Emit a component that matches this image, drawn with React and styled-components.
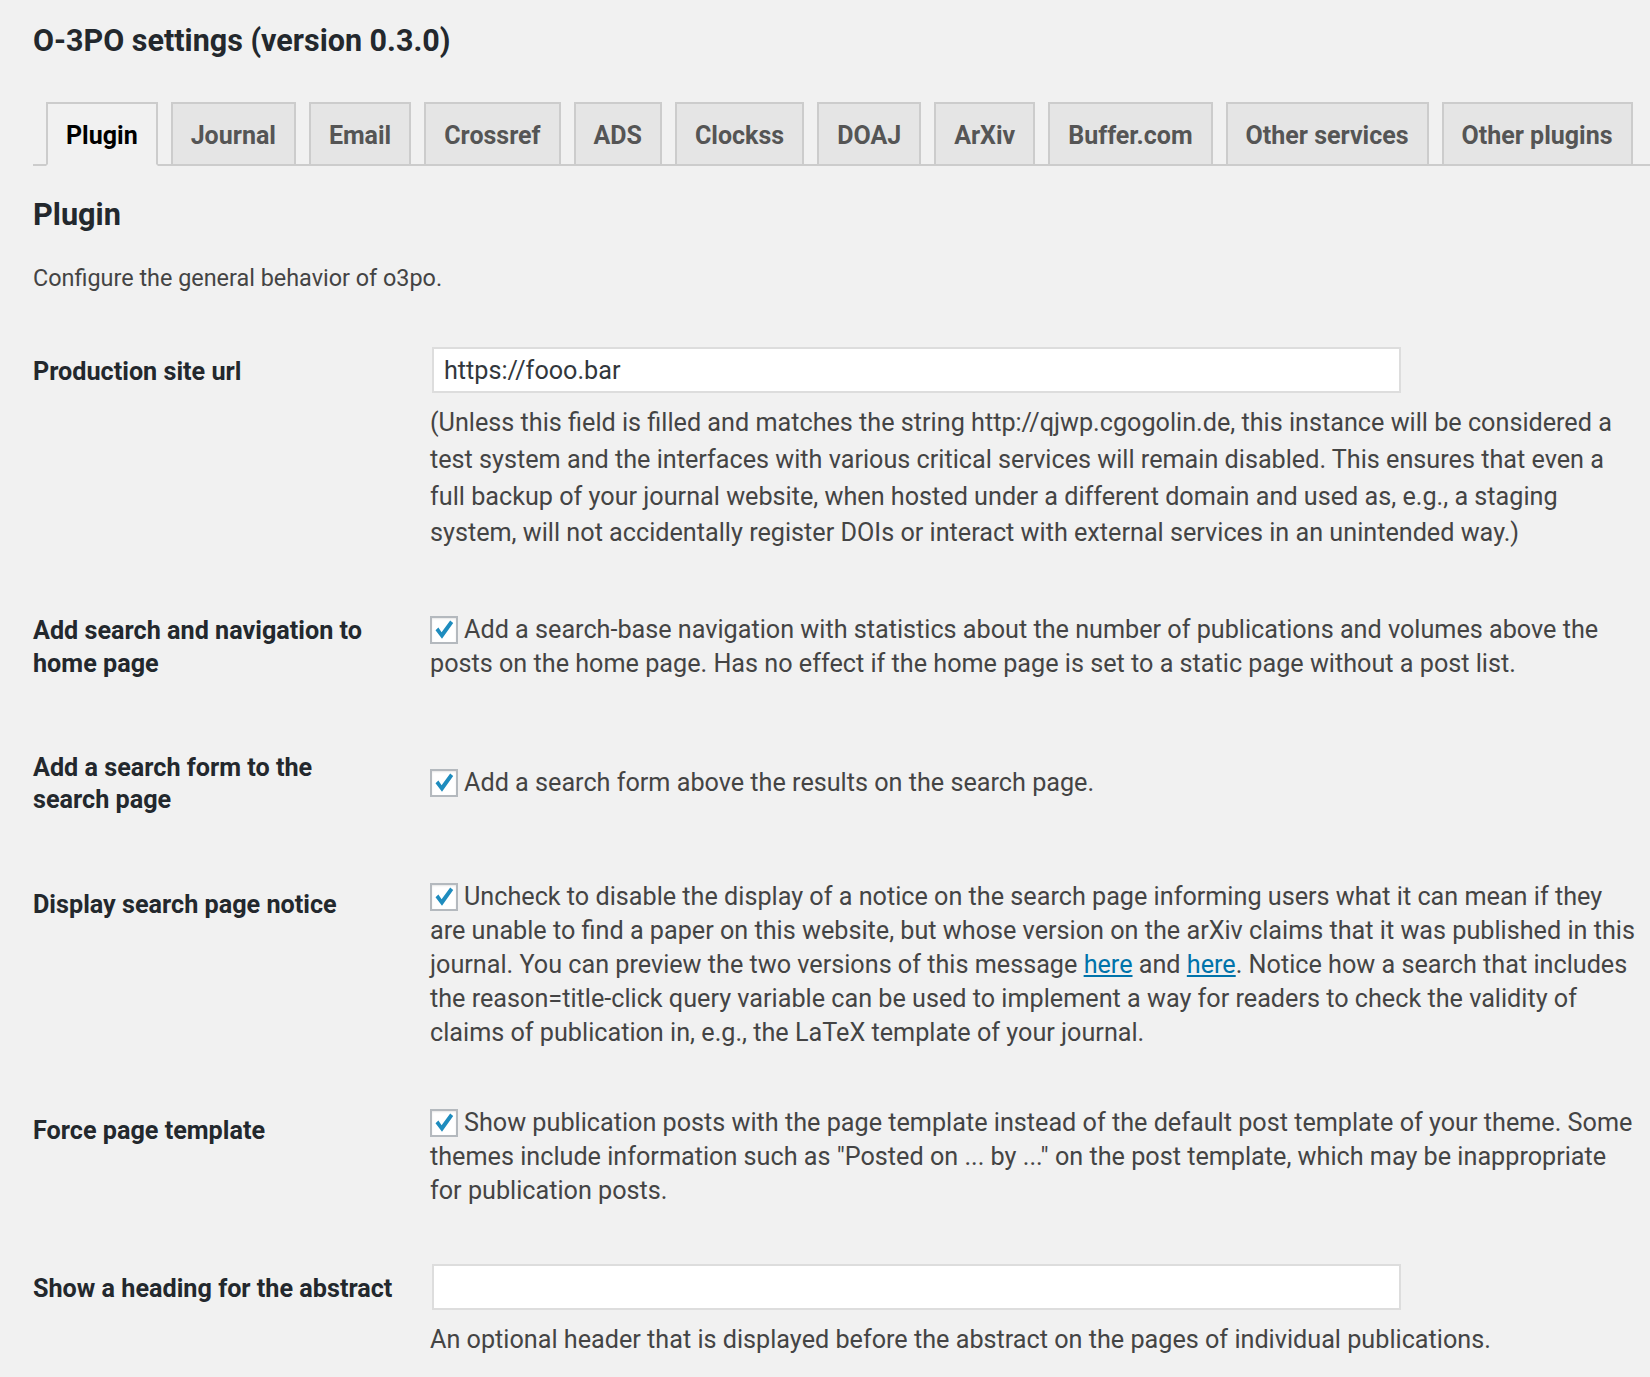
import React from "react";
import styled, { createGlobalStyle } from "styled-components";

const Global = createGlobalStyle`
  html, body { margin: 0; padding: 0; background: #f1f1f1; }
  body { font-family: Roboto, "Liberation Sans", sans-serif; color: #444; }
  * { box-sizing: border-box; }
`;

const Wrap = styled.div`
  padding: 16px 12px 40px 33px;
`;

const Title = styled.h1`
  margin: 0;
  font-size: 30.5px;
  font-weight: 700;
  line-height: 50px;
  color: #23282d;
`;

const TabBar = styled.nav`
  display: flex;
  gap: 13px;
  margin-top: 36px;
  margin-right: -12px;
  padding-left: 13px;
  border-bottom: 2px solid #ccc;
`;

const Tab = styled.a`
  display: block;
  padding: 3px 18px 0;
  height: 64px;
  line-height: 57px;
  font-size: 25px;
  font-weight: 700;
  text-decoration: none;
  border: 2px solid #ccc;
  margin-bottom: -2px;
  background: ${(p) => (p.$active ? "#f1f1f1" : "#e5e5e5")};
  border-bottom-color: ${(p) => (p.$active ? "#f1f1f1" : "#ccc")};
  color: ${(p) => (p.$active ? "#000" : "#555")};
`;

const SectionTitle = styled.h2`
  margin: 28.5px 0 0;
  font-size: 30.7px;
  font-weight: 700;
  line-height: 40px;
  color: #23282d;
`;

const Intro = styled.p`
  margin: 26.5px 0 0;
  font-size: 23.4px;
  line-height: 35px;
`;

const Form = styled.div`
  margin-top: 23px;
`;

const Row = styled.div`
  display: grid;
  grid-template-columns: 397px 1fr;
  align-items: center;
`;

const Label = styled.div`
  align-self: start;
  padding: 37px 37.5px 34.5px 0;
  font-size: 25.2px;
  font-weight: 700;
  line-height: 32.6px;
  color: #23282d;
`;

const Field = styled.div`
  padding: 28px 0 ${(p) => (p.$tight ? "26px" : "28px")};
`;

const TextInput = styled.input`
  display: block;
  width: 969px;
  height: 46px;
  margin-left: 2px;
  padding: 0 10px;
  border: 2px solid #ddd;
  background: #fff;
  font-family: Roboto, "Liberation Sans", sans-serif;
  font-size: 25.2px;
  color: #32373c;
  outline: none;
`;

const Description = styled.p`
  margin: 12px 0 0;
  font-size: 25.2px;
  line-height: 36.8px;
  color: #444;
`;

const CheckText = styled.div`
  font-size: 25.2px;
  line-height: 34px;
  color: #444;
`;

const Box = styled.span`
  display: inline-flex;
  align-items: center;
  justify-content: center;
  width: 28px;
  height: 28px;
  margin-right: 6px;
  vertical-align: -4px;
  background: #fff;
  border: 2px solid #b4b9be;
  box-shadow: inset 0 1px 2px rgba(0,0,0,0.1);
`;

const Link = styled.a`
  color: #0073aa;
  text-decoration: underline;
`;

const Check = () => (
  <Box>
    <svg width="24" height="24" viewBox="0 0 24 24">
      <path d="M3.5 12.2 L6.4 9.6 L9.6 14.2 L18.2 2.6 L21.2 5 L10 20.8 Z" fill="#1e8cbe" />
    </svg>
  </Box>
);

const tabs = ["Plugin", "Journal", "Email", "Crossref", "ADS", "Clockss", "DOAJ", "ArXiv", "Buffer.com", "Other services", "Other plugins"];

export default function App() {
  return (
    <>
      <Global />
      <Wrap>
        <Title>O-3PO settings (version 0.3.0)</Title>
        <TabBar>
          {tabs.map((t, i) => (
            <Tab key={t} href="#" $active={i === 0}>{t}</Tab>
          ))}
        </TabBar>
        <SectionTitle>Plugin</SectionTitle>
        <Intro>Configure the general behavior of o3po.</Intro>
        <Form>
          <Row>
            <Label>Production site url</Label>
            <Field $tight>
              <TextInput defaultValue="https://fooo.bar" />
              <Description>
                (Unless this field is filled and matches the string http://qjwp.cgogolin.de, this instance will be considered a test system and the interfaces with various critical services will remain disabled. This ensures that even a full backup of your journal website, when hosted under a different domain and used as, e.g., a staging system, will not accidentally register DOIs or interact with external services in an unintended way.)
              </Description>
            </Field>
          </Row>
          <Row>
            <Label>Add search and navigation to home page</Label>
            <Field>
              <CheckText>
                <Check />Add a search-base navigation with statistics about the number of publications and volumes above the posts on the home page. Has no effect if the home page is set to a static page without a post list.
              </CheckText>
            </Field>
          </Row>
          <Row>
            <Label>Add a search form to the search page</Label>
            <Field>
              <CheckText>
                <Check />Add a search form above the results on the search page.
              </CheckText>
            </Field>
          </Row>
          <Row>
            <Label>Display search page notice</Label>
            <Field>
              <CheckText>
                <Check />Uncheck to disable the display of a notice on the search page informing users what it can mean if they are unable to find a paper on this website, but whose version on the arXiv claims that it was published in this journal. You can preview the two versions of this message <Link href="#">here</Link> and <Link href="#">here</Link>. Notice how a search that includes the reason=title-click query variable can be used to implement a way for readers to check the validity of claims of publication in, e.g., the LaTeX template of your journal.
              </CheckText>
            </Field>
          </Row>
          <Row>
            <Label>Force page template</Label>
            <Field>
              <CheckText>
                <Check />Show publication posts with the page template instead of the default post template of your theme. Some themes include information such as "Posted on ... by ..." on the post template, which may be inappropriate for publication posts.
              </CheckText>
            </Field>
          </Row>
          <Row>
            <Label>Show a heading for the abstract</Label>
            <Field>
              <TextInput defaultValue="" />
              <Description>
                An optional header that is displayed before the abstract on the pages of individual publications.
              </Description>
            </Field>
          </Row>
        </Form>
      </Wrap>
    </>
  );
}
